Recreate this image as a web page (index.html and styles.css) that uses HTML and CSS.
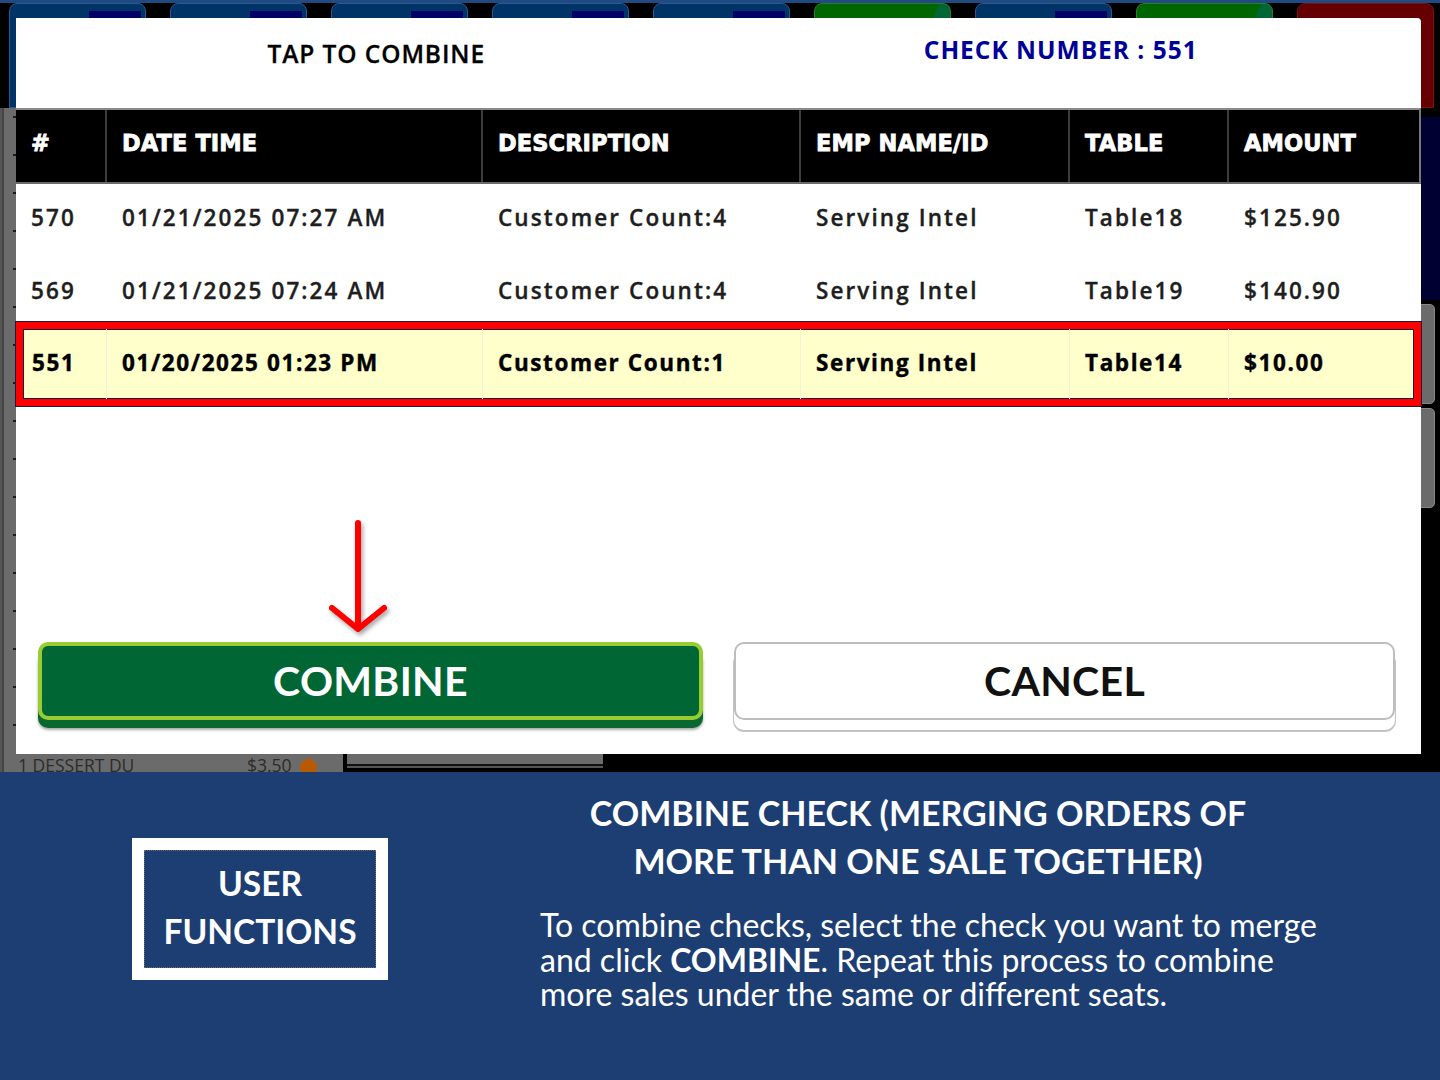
FILE: index.html
```html
<!DOCTYPE html>
<html lang="en">
<head>
<meta charset="utf-8">
<title>Combine Check</title>
<link rel="stylesheet" href="styles.css">
</head>
<body>
<div class="page">
  <section class="screen">
    <div class="app">
      <div class="app-top"></div>
      <div class="tabs">
        <div class="tab tab-blue"><span class="tab-block"></span></div>
        <div class="tab tab-blue"><span class="tab-block"></span></div>
        <div class="tab tab-blue"><span class="tab-block"></span></div>
        <div class="tab tab-blue"><span class="tab-block"></span></div>
        <div class="tab tab-blue"><span class="tab-block"></span></div>
        <div class="tab tab-green"></div>
        <div class="tab tab-blue"><span class="tab-block"></span></div>
        <div class="tab tab-green"></div>
        <div class="tab tab-red"></div>
      </div>
      <div class="app-main">
        <div class="order-panel">
          <div class="order-list"></div>
          <div class="order-line"><span class="item">1 DESSERT DU</span><span class="price">$3.50</span><span class="dot"></span></div>
        </div>
        <div class="center-area"><div class="center-bar"></div></div>
        <div class="side-col">
          <div class="side-navy"></div>
          <div class="side-btn"></div>
          <div class="side-btn"></div>
        </div>
      </div>
    </div>

    <div class="modal">
      <div class="modal-head">
        <div class="head-title">TAP TO COMBINE</div>
        <div class="head-check">CHECK NUMBER : 551</div>
      </div>
      <div class="thead">
        <div class="th">#</div>
        <div class="th">DATE TIME</div>
        <div class="th">DESCRIPTION</div>
        <div class="th">EMP NAME/ID</div>
        <div class="th">TABLE</div>
        <div class="th">AMOUNT</div>
      </div>
      <div class="trow">
        <div class="td">570</div>
        <div class="td">01/21/2025 07:27 AM</div>
        <div class="td">Customer Count:4</div>
        <div class="td">Serving Intel</div>
        <div class="td">Table18</div>
        <div class="td">$125.90</div>
      </div>
      <div class="trow trow-low">
        <div class="td">569</div>
        <div class="td">01/21/2025 07:24 AM</div>
        <div class="td">Customer Count:4</div>
        <div class="td">Serving Intel</div>
        <div class="td">Table19</div>
        <div class="td">$140.90</div>
      </div>
      <div class="trow trow-selected">
        <div class="td td-first">551</div>
        <div class="td">01/20/2025 01:23 PM</div>
        <div class="td">Customer Count:1</div>
        <div class="td">Serving Intel</div>
        <div class="td">Table14</div>
        <div class="td">$10.00</div>
      </div>
      <div class="modal-space"></div>
      <div class="modal-actions">
        <button class="btn btn-combine">COMBINE</button>
        <button class="btn btn-cancel">CANCEL</button>
      </div>
      <svg class="arrow" width="64" height="118" viewBox="0 0 64 118">
        <path d="M32 7 L32 110 M6 92 L32 113 L58 92" fill="none" stroke="#ff0000" stroke-width="6" stroke-linecap="round" stroke-linejoin="round"/>
      </svg>
    </div>
  </section>

  <section class="info">
    <div class="info-left">
      <div class="badge"><div class="badge-inner">USER<br>FUNCTIONS</div></div>
    </div>
    <div class="info-text">
      <h1 class="info-title">COMBINE CHECK (MERGING ORDERS OF<br>MORE THAN ONE SALE TOGETHER)</h1>
      <p class="info-body">To combine checks, select the check you want to merge<br>and click <b>COMBINE</b>. Repeat this process to combine<br>more sales under the same or different seats.</p>
    </div>
  </section>
</div>
</body>
</html>
```

FILE: styles.css
```css
* { box-sizing: border-box; }
html, body { margin: 0; padding: 0; }
body { width: 1440px; height: 1080px; overflow: hidden; background: #000; font-family: "Lato", "Liberation Sans", sans-serif; }

.page { width: 1440px; height: 1080px; display: flex; flex-direction: column; }

/* ---------- background app ---------- */
.screen { position: relative; height: 772px; background: #000; overflow: hidden; }
.app { height: 772px; display: flex; flex-direction: column; }
.app-top { height: 3px; background: #1f4a82; }
.tabs { height: 105px; display: flex; gap: 24px; padding-left: 9px; }
.tab { width: 137px; height: 100%; border-radius: 8px 8px 0 0; border: 1px solid #2a5a94; display: flex; justify-content: flex-end; padding: 7px 4px 0 0; }
.tab-blue { background: #003366; }
.tab-block { width: 52px; height: 100%; background: #000066; }
.tab-green { background: linear-gradient(115deg, #006600 0 68%, #006633 68% 84%, #3b7a3f 84%); border-color: #2e7a32; }
.tab-red { background: #660000; border-color: #7a1010; }

.app-main { flex: 1; display: flex; }
.order-panel { width: 343px; background: #6b6b6b; display: flex; flex-direction: column; border-left: 2px solid #555; box-shadow: inset 2px 0 0 #444; overflow: hidden; }
.order-list { flex: 1; background-image: linear-gradient(to bottom, transparent 36px, #1a1a1a 36px); background-size: 3px 38px; background-repeat: repeat-y; background-position: 11px 10px; }
.order-line { height: 24px; display: flex; align-items: flex-start; padding: 7px 0 0 16px; font-family: "Open Sans", "Liberation Sans", sans-serif; font-size: 17.5px; line-height: 20px; color: #2b2b2b; overflow: hidden; }
.order-line .item { width: 229px; }
.order-line .price { width: 53px; }
.order-line .dot { width: 17px; height: 17px; border-radius: 50%; background: #b85a00; margin-top: 4px; flex-shrink: 0; }

.center-area { width: 260px; padding-left: 4px; display: flex; flex-direction: column; justify-content: flex-end; }
.center-bar { height: 12px; background: #6b6b6b; border-bottom: 2px solid #111; box-shadow: 0 2px 0 #555; margin-bottom: 6px; }

.side-col { margin-left: auto; width: 24px; display: flex; flex-direction: column; padding-top: 9px; gap: 4px; }
.side-navy { height: 183px; background: #000033; }
.side-btn { width: 19px; height: 100px; background: #6b6b6b; border-radius: 0 5px 5px 0; border: 1px solid #888; }

/* ---------- modal ---------- */
.modal { position: absolute; left: 16px; top: 18px; width: 1405px; height: 736px; background: #fff; border-radius: 0 4px 0 0; display: flex; flex-direction: column; }
.modal-head { height: 90px; display: grid; grid-template-columns: 1fr 1fr; align-items: center; }
.head-title { text-align: center; padding-left: 18px; padding-bottom: 20px; font-family: "Open Sans", "Liberation Sans", sans-serif; font-weight: 600; font-size: 24.5px; letter-spacing: 0.9px; color: #000; -webkit-text-stroke: 0.3px #000; }
.head-check { text-align: center; padding-right: 18px; padding-bottom: 27px; font-family: "Open Sans", "Liberation Sans", sans-serif; font-weight: 700; font-size: 24.5px; letter-spacing: 1px; color: #000099; }

.thead, .trow { display: grid; grid-template-columns: 91px 376px 318px 269px 159px 1fr; }
.thead { height: 76px; background: #000; border-top: 2px solid #8a8a8a; border-bottom: 2px solid #6a6a6a; border-right: 2px solid #777; }
.th { display: flex; align-items: center; padding: 0 0 6px 15px; border-right: 2px solid #3c3c3c; color: #fff; font-family: "DejaVu Sans", "Verdana", sans-serif; font-weight: 700; font-size: 22.5px; letter-spacing: 0.1px; -webkit-text-stroke: 0.8px #fff; }
.th:last-child { border-right: none; }

.trow { height: 69px; }
.td { display: flex; align-items: center; padding-left: 15px; padding-bottom: 2px; font-family: "Open Sans", "Liberation Sans", sans-serif; font-weight: 600; font-size: 22.5px; letter-spacing: 2.1px; color: #1e1e1e; white-space: nowrap; -webkit-text-stroke: 0.35px #1e1e1e; }
.trow-low .td { padding-bottom: 0; padding-top: 5px; }

.trow-selected { height: 84px; border: 7px solid #ff0000; background: #ffffcc; grid-template-columns: 84px 376px 318px 269px 159px 1fr; box-shadow: 0 0 0 1px #1c1c3c, inset 0 0 0 1px #1c1c3c; }
.trow-selected .td { font-weight: 700; color: #000; border-right: 1px solid #f2f2dc; padding-bottom: 3px; letter-spacing: 1.6px; -webkit-text-stroke: 0.4px #000; }
.trow-selected .td:last-child { border-right: none; }
.trow-selected .td-first { padding-left: 9px; }

.modal-space { flex: 1; }
.modal-actions { height: 78px; margin-bottom: 34px; display: flex; gap: 31px; padding: 0 26px 0 22px; }
.btn { flex: 1; height: 78px; border-radius: 10px; font-family: "Lato", "Liberation Sans", sans-serif; font-weight: 700; font-size: 41px; letter-spacing: 0.3px; display: flex; align-items: center; justify-content: center; padding: 0 0 2px 0; cursor: pointer; }
.btn-combine { background: #006633; color: #fff; border: 4px solid #99cc33; box-shadow: 0 8px 0 #08682f, 0 10px 3px rgba(0,0,0,0.35); }
.btn-cancel { background: #fff; color: #111; border: 2px solid #bdbdbd; box-shadow: 0 10px 0 0 #fff, 0 11px 0 1px #c4c4c4; }

.arrow { position: absolute; left: 310px; top: 498px; filter: drop-shadow(2px 3px 2px rgba(0,0,0,0.35)); }

/* ---------- info ---------- */
.info { flex: 1; background: #1d3e72; display: flex; align-items: flex-start; }
.info-left { width: 520px; display: flex; justify-content: center; padding: 66px 0 0 0; }
.badge { width: 256px; height: 142px; border: 12px solid #fff; background: #1d3e72; }
.badge-inner { height: 100%; border: 1px dotted #6a6a6a; display: flex; align-items: center; justify-content: center; text-align: center; color: #fff; font-weight: 700; font-size: 33.5px; line-height: 48px; padding-bottom: 4px; }
.info-text { width: 796px; padding-top: 17px; color: #fff; }
.info-title { margin: 0; text-align: center; font-weight: 700; font-size: 34px; line-height: 48px; }
.info-body { margin: 23px 0 0 0; padding-left: 20px; font-weight: 400; font-size: 32px; line-height: 34.5px; white-space: nowrap; }
.info-body b { font-weight: 700; }
```
